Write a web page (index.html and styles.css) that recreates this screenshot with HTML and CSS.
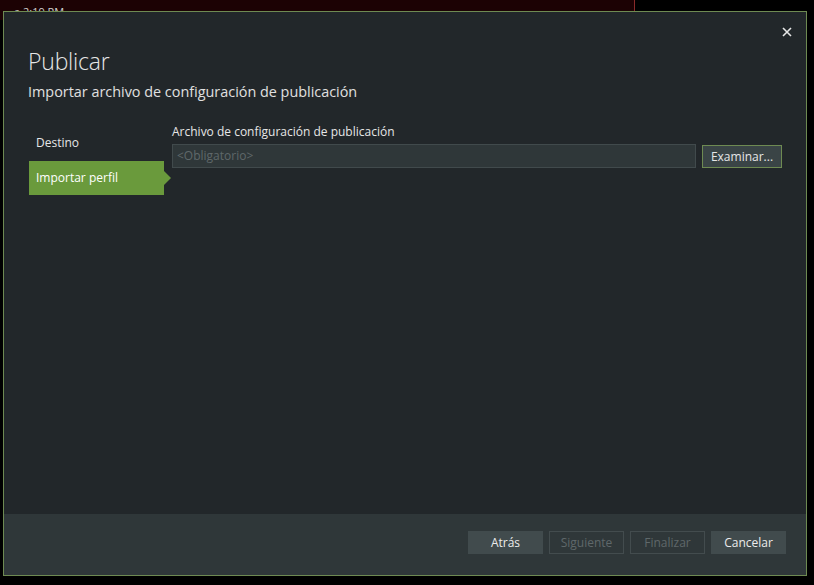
FILE: index.html
```html
<!DOCTYPE html>
<html lang="es">
<head>
<meta charset="utf-8">
<title>Publicar</title>
<link rel="stylesheet" href="styles.css">
</head>
<body>
<div class="backdrop">
  <div class="bg-strip"><span class="bg-text">a 2:19 PM</span></div>
</div>
<div class="dialog">
  <div class="main">
    <button class="close" aria-label="Cerrar">
      <svg width="10" height="10" viewBox="0 0 10 10"><path d="M1 1L9 9M9 1L1 9" stroke="#e6e6e6" stroke-width="1.6"/></svg>
    </button>
    <header class="head">
      <h1 class="title">Publicar</h1>
      <p class="subtitle">Importar archivo de configuración de publicación</p>
    </header>
    <div class="body">
      <nav class="nav">
        <div class="nav-item">Destino</div>
        <div class="nav-item active">Importar perfil</div>
      </nav>
      <section class="content">
        <label class="field-label">Archivo de configuración de publicación</label>
        <div class="field-row">
          <div class="input">&lt;Obligatorio&gt;</div>
          <button class="browse">Examinar...</button>
        </div>
      </section>
    </div>
  </div>
  <footer class="footer">
    <button class="btn">Atrás</button>
    <button class="btn disabled">Siguiente</button>
    <button class="btn disabled">Finalizar</button>
    <button class="btn">Cancelar</button>
  </footer>
</div>
</body>
</html>
```
FILE: styles.css
```css
* { box-sizing: border-box; }
html, body { margin: 0; padding: 0; }
body {
  width: 814px;
  height: 585px;
  background: #000;
  font-family: "Open Sans", "Noto Sans", sans-serif;
  position: relative;
  overflow: hidden;
}
.backdrop {
  position: absolute;
  left: 0; top: 0;
  width: 814px; height: 585px;
}
.bg-strip {
  width: 635px;
  height: 20px;
  background: #1c0204;
  border-right: 1px solid #8a2a2a;
}
.bg-text {
  display: block;
  margin-left: 14px;
  padding-top: 6px;
  color: #cfcfcf;
  font-size: 11px;
  line-height: 12px;
}
.dialog {
  position: absolute;
  left: 3px;
  top: 11px;
  width: 804px;
  height: 565px;
  background: #22272a;
  border: 1px solid #6e8a52;
  display: flex;
  flex-direction: column;
}
.main {
  flex: 1;
  position: relative;
  padding: 0 24px 0 24px;
}
.close {
  position: absolute;
  right: 13px;
  top: 14px;
  width: 12px;
  height: 12px;
  padding: 0;
  border: 0;
  background: transparent;
  display: flex;
  align-items: center;
  justify-content: center;
}
.head { padding-top: 34px; }
.title {
  margin: 0;
  font-weight: 300;
  font-size: 23px;
  line-height: 30px;
  color: #e6e6e6;
  letter-spacing: -0.2px;
}
.subtitle {
  margin: 6px 0 0 0;
  font-size: 14.4px;
  line-height: 20px;
  color: #e0e0e0;
}
.body {
  display: flex;
  margin-top: 13px;
}
.nav {
  width: 135px;
  display: flex;
  flex-direction: column;
  margin-left: 1px;
  margin-top: 14px;
}
.nav-item {
  height: 34px;
  line-height: 34px;
  padding-left: 7px;
  font-size: 12px;
  color: #e6e6e6;
  position: relative;
}
.nav-item:first-child {
  height: 32px;
  line-height: 28px;
}
.nav-item.active {
  background: #6a9a3c;
  color: #fff;
}
.nav-item.active::after {
  content: "";
  position: absolute;
  right: -7px;
  top: 10px;
  border-left: 7px solid #6a9a3c;
  border-top: 7px solid transparent;
  border-bottom: 7px solid transparent;
}
.content {
  flex: 1;
  margin-left: 8px;
  padding-top: 9px;
}
.field-label {
  display: block;
  font-size: 12px;
  line-height: 16px;
  color: #e6e6e6;
  margin-bottom: 4px;
}
.field-row {
  display: flex;
  align-items: center;
  gap: 6px;
}
.input {
  flex: 1;
  height: 24px;
  background: #2f3739;
  border: 1px solid #414a4c;
  color: #5f686a;
  font-size: 12px;
  line-height: 22px;
  padding-left: 4px;
}
.browse {
  width: 80px;
  height: 23px;
  background: #3a4446;
  border: 1px solid #6e8a52;
  color: #e6e6e6;
  font-family: inherit;
  font-size: 12px;
  padding: 0;
}
.footer {
  height: 61px;
  background: #2f3739;
  display: flex;
  justify-content: flex-end;
  align-items: flex-start;
  gap: 6px;
  padding: 17px 20px 0 0;
}
.btn {
  width: 75px;
  height: 23px;
  background: #414b4d;
  border: 1px solid #414b4d;
  color: #ececec;
  font-family: inherit;
  font-size: 12px;
  padding: 0;
}
.btn.disabled {
  background: transparent;
  border-color: #434c4e;
  color: #5f686a;
}
```
